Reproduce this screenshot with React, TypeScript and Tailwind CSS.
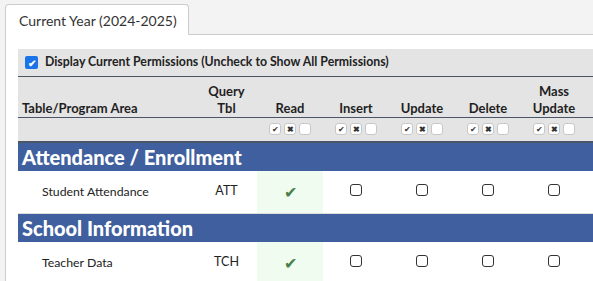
const cols = ['Read', 'Insert', 'Update', 'Delete']

const sections = [
  { title: 'Attendance / Enrollment', rows: [{ name: 'Student Attendance', tbl: 'ATT' }] },
  { title: 'School Information', rows: [{ name: 'Teacher Data', tbl: 'TCH' }] },
]

function MiniButtons() {
  return (
    <div className="flex items-center justify-center gap-[3px]">
      <span className="flex h-[12px] w-[12px] items-center justify-center rounded-[3px] border border-[#c8c8c8] bg-white text-[8px] leading-none text-[#333]">
        ✔
      </span>
      <span className="flex h-[12px] w-[12px] items-center justify-center rounded-[3px] border border-[#c8c8c8] bg-white text-[8px] font-bold leading-none text-[#333]">
        ✖
      </span>
      <span className="h-[12px] w-[12px] rounded-[3px] border border-[#c8c8c8] bg-white" />
    </div>
  )
}

function Box() {
  return <span className="inline-block h-[12px] w-[12px] rounded-[3px] border-[1.5px] border-[#333]" />
}

export default function App() {
  return (
    <div
      className="h-[281px] w-[593px] overflow-hidden bg-[#f3f3f3] pl-[5px] pt-[4px]"
      style={{ fontFamily: 'Lato, "Open Sans", sans-serif' }}
    >
      <div className="flex">
        <div className="relative z-10 -mb-px flex h-[31px] w-[184px] items-center rounded-t-[4px] border border-b-0 border-[#cccccc] bg-white pl-[13px] text-[14px] text-[#333]">
          Current Year (2024-2025)
        </div>
      </div>
      <div className="h-[300px] w-[700px] border-l border-t border-[#cccccc] bg-white pl-[12px] pt-[14px]">
        <div className="flex h-[28px] items-center gap-[7px] border-b border-[#4b5565] bg-[#e4e4e4] pl-[7px] text-[12.3px] font-bold text-[#222]">
          <span className="flex h-[13px] w-[13px] items-center justify-center rounded-[2px] bg-[#1a73e8] text-[10px] leading-none text-white">
            ✔
          </span>
          Display Current Permissions (Uncheck to Show All Permissions)
        </div>
        <table className="w-[680px] table-fixed border-collapse text-[12px] text-[#222]">
          <colgroup>
            <col className="w-[178px]" />
            <col className="w-[61px]" />
            <col className="w-[66px]" />
            <col className="w-[66px]" />
            <col className="w-[66px]" />
            <col className="w-[66px]" />
            <col className="w-[66px]" />
            <col />
          </colgroup>
          <thead>
            <tr className="h-[40px] border-b border-[#4b5565] bg-[#e4e4e4] text-[13px] text-[#1f1f1f]">
              <th className="pb-0 pl-[4px] text-left align-bottom font-bold leading-[18px]">Table/Program Area</th>
              <th className="pb-0 text-center align-bottom font-bold leading-[17px]">
                Query
                <br />
                Tbl
              </th>
              {cols.map((c) => (
                <th key={c} className="pb-0 text-center align-bottom font-bold leading-[18px]">
                  {c}
                </th>
              ))}
              <th className="pb-0 text-center align-bottom font-bold leading-[17px]">
                Mass
                <br />
                Update
              </th>
              <th />
            </tr>
            <tr className="h-[25px] border-b-2 border-[#4b5565] bg-[#e4e4e4]">
              <td />
              <td />
              {[0, 1, 2, 3, 4].map((i) => (
                <td key={i}>
                  <MiniButtons />
                </td>
              ))}
              <td />
            </tr>
          </thead>
          <tbody>
            {sections.map((s) => (
              <>
                <tr key={s.title} className="h-[29px] bg-[#405f9e]">
                  <td colSpan={8} className="pl-[4px] text-[20px] font-black leading-[24px] text-white">
                    {s.title}
                  </td>
                </tr>
                <tr key={s.title + '-row'} className="h-[42px] border-b border-[#dddddd]">
                  <td className="pl-[24px] text-[12.3px]">{s.rows[0].name}</td>
                  <td className="text-center text-[12.5px]">{s.rows[0].tbl}</td>
                  <td className="bg-[#effcef] text-center text-[16px] text-[#4a7f4a]">✔</td>
                  {[0, 1, 2, 3].map((i) => (
                    <td key={i} className="text-center">
                      <Box />
                    </td>
                  ))}
                  <td />
                </tr>
              </>
            ))}
          </tbody>
        </table>
      </div>
    </div>
  )
}
